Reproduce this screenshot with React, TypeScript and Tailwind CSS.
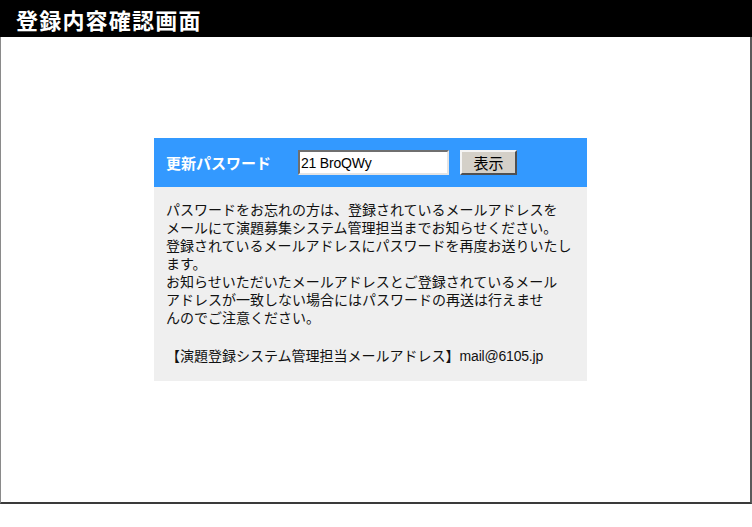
import React from "react";

export default function App() {
  const jp = { fontFamily: '"MS PGothic", "Noto Sans CJK JP", "Noto Sans", sans-serif' };
  const lat = { fontFamily: '"Liberation Sans", Arial, sans-serif' };
  return (
    <div className="w-[752px] h-[527px] bg-white flex flex-col" style={jp}>
      <div className="h-[37px] bg-black flex items-center pl-[16px]">
        <span className="text-white font-bold text-[22px] leading-none tracking-[1.2px]">登録内容確認画面</span>
      </div>
      <div className="w-[752px] h-[467px] border-l border-l-[#8a8a8a] border-r-2 border-r-[#5a5a5a] border-b-2 border-b-[#3a3a3a] flex flex-col pt-[101px] pl-[153px]">
        <div className="w-[433px] flex flex-col">
          <div className="h-[49px] bg-[#3399ff] flex items-center pl-[12px]">
            <span className="w-[132px] text-white text-[15px] font-bold leading-none">更新パスワード</span>
            <div className="w-[151px] h-[25px] bg-white border-2 border-t-[#6f6f6f] border-l-[#6f6f6f] border-r-[#e4e4e4] border-b-[#e4e4e4] flex items-center pl-[1px]">
              <span className="text-[14px] text-black leading-none tracking-[-0.2px]" style={lat}>21 BroQWy</span>
            </div>
            <div className="ml-[11px] w-[57px] h-[25px] bg-[#d4d0c8] border-2 border-t-[#f4f4f4] border-l-[#f4f4f4] border-r-[#505050] border-b-[#505050] flex items-center justify-center">
              <span className="text-[15px] text-black leading-none">表示</span>
            </div>
          </div>
          <div className="bg-[#efefef] pl-[12px] pt-[13px] pb-[16px] text-[14px] leading-[18px] text-[#111] whitespace-nowrap">
            <p>
              パスワードをお忘れの方は、登録されているメールアドレスを<br />
              メールにて演題募集システム管理担当までお知らせください。<br />
              登録されているメールアドレスにパスワードを再度お送りいたし<br />
              ます。<br />
              お知らせいただいたメールアドレスとご登録されているメール<br />
              アドレスが一致しない場合にはパスワードの再送は行えませ<br />
              んのでご注意ください。
            </p>
            <p className="mt-[20px]">
              【演題登録システム管理担当メールアドレス】<span style={lat} className="text-[14px] tracking-[-0.2px]">mail@6105.jp</span>
            </p>
          </div>
        </div>
      </div>
    </div>
  );
}
